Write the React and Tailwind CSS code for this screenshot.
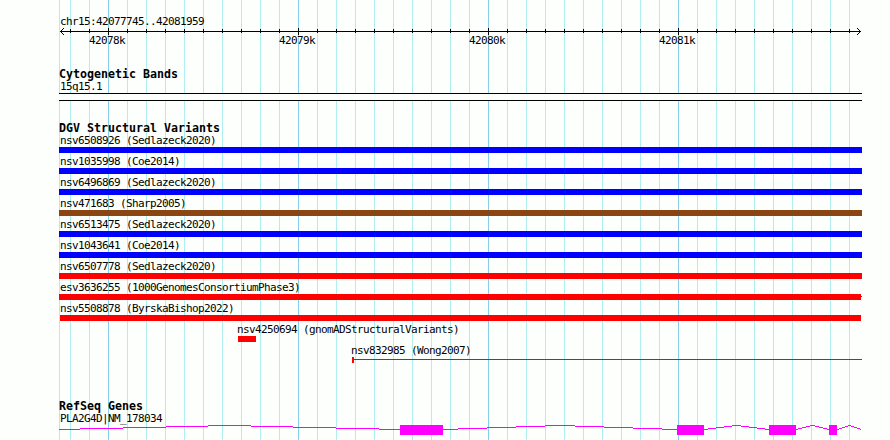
const MONO = "font-['DejaVu_Sans_Mono','Liberation_Mono',monospace]";

const minorLines = [59, ...Array.from({ length: 42 }, (_, i) => 70 + i * 19)].filter(
  (x) => x === 59 || (x - 108) % 190 !== 0
);
const majorLines = [108, 298, 488, 678];

function GridLines() {
  return (
    <svg className="absolute inset-0" width="890" height="440" shapeRendering="crispEdges">
      {minorLines.map((x) => (
        <rect key={x} x={x} y="0" width="1" height="440" fill="#afeeee" />
      ))}
      {majorLines.map((x) => (
        <rect key={x} x={x} y="0" width="1" height="440" fill="#87ceeb" />
      ))}
    </svg>
  );
}

function Label({ children, className = "" }) {
  return (
    <div className={`h-3 whitespace-pre text-[11px] leading-3 tracking-[-0.622px] ${className}`}>
      {children}
    </div>
  );
}

function Title({ children }) {
  return (
    <h2 className="h-[13px] whitespace-pre text-[11.63px] font-bold leading-3">{children}</h2>
  );
}

function Ruler() {
  const ticks = minorLines.slice(1);
  return (
    <svg className="block h-[9px] w-[803px]" viewBox="59 28 803 9" shapeRendering="crispEdges">
      <rect x="60" y="31" width="801" height="1" fill="#000" />
      {ticks.map((x) => (
        <rect key={x} x={x} y="29" width="1" height="4" fill="#000" />
      ))}
      {majorLines.map((x) => (
        <rect key={x} x={x} y="28" width="1" height="7" fill="#000" />
      ))}
      <path
        d="M60 31h1v1h-1zM61 30h1v1h-1zM61 32h1v1h-1zM62 29h1v1h-1zM62 33h1v1h-1zM63 28h1v1h-1zM63 34h1v1h-1z"
        fill="#000"
      />
      <path
        d="M860 31h1v1h-1zM859 30h1v1h-1zM859 32h1v1h-1zM858 29h1v1h-1zM858 33h1v1h-1zM857 28h1v1h-1zM857 34h1v1h-1z"
        fill="#000"
      />
    </svg>
  );
}

const variants = [
  { name: "nsv6508926 (Sedlazeck2020)", bar: "w-[803px] bg-[#0000ff]" },
  { name: "nsv1035998 (Coe2014)", bar: "w-[803px] bg-[#0000ff]" },
  { name: "nsv6496869 (Sedlazeck2020)", bar: "w-[803px] bg-[#0000ff]" },
  { name: "nsv471683 (Sharp2005)", bar: "w-[803px] bg-[#8b4513]" },
  { name: "nsv6513475 (Sedlazeck2020)", bar: "w-[803px] bg-[#0000ff]" },
  { name: "nsv1043641 (Coe2014)", bar: "w-[803px] bg-[#0000ff]" },
  { name: "nsv6507778 (Sedlazeck2020)", bar: "w-[803px] bg-[#ff0000]" },
  { name: "esv3636255 (1000GenomesConsortiumPhase3)", bar: "w-[802px] bg-[#ff0000]", tail: true },
  { name: "nsv5508878 (ByrskaBishop2022)", bar: "ml-px w-[801px] bg-[#ff0000]" },
  {
    name: "nsv4250694 (gnomADStructuralVariants)",
    indent: "pl-[178px]",
    bar: "ml-[179px] w-[18px] bg-[#ff0000]",
  },
];

function Variant({ name, indent = "pl-px", bar, tail }) {
  return (
    <div className="flex h-[21px] flex-col">
      <Label className={indent}>{name}</Label>
      <div className="flex h-[6px]">
        <div className={`h-[6px] ${bar}`} />
        {tail && <div className="mt-[2px] h-px w-px bg-[#ff0000]" />}
      </div>
    </div>
  );
}

const exons = [
  [400, 443],
  [677, 704],
  [769, 796],
  [829, 837],
];
const introns = [
  [59, 400],
  [443, 677],
  [704, 769],
  [796, 829],
  [837, 861],
];

// Each intron is a shallow hat rising four pixels to its midpoint, drawn in one-pixel steps.
function intronSteps([start, end]) {
  const unit = (end - start) / 8;
  const edges = [0, 0.5, 1.5, 2.5, 3.5, 4.5, 5.5, 6.5, 7.5, 8].map((k) =>
    Math.round(start + unit * k)
  );
  return [429, 428, 427, 426, 425, 426, 427, 428, 429].map((y, i) => ({
    x: edges[i],
    y,
    width: edges[i + 1] - edges[i],
  }));
}

function Gene() {
  return (
    <svg
      className="block h-[12px] w-[803px]"
      viewBox="59 425 803 12"
      shapeRendering="crispEdges"
      fill="#ff00ff"
    >
      {introns.flatMap(intronSteps).map((s) => (
        <rect key={s.x} x={s.x} y={s.y} width={s.width} height="1" />
      ))}
      {exons.map(([a, b]) => (
        <rect key={a} x={a} y="425" width={b - a} height="10" />
      ))}
    </svg>
  );
}

export default function App() {
  return (
    <div className={`relative h-[440px] w-[890px] overflow-hidden bg-[#fcfffc] text-black ${MONO}`}>
      <GridLines />
      <main className="relative flex flex-col pl-[59px]">
        <section className="flex h-[68px] flex-col pt-4">
          <Label className="pl-px">chr15:42077745..42081959</Label>
          <Ruler />
          <div className="-mt-[2px] flex gap-[154px] pl-[30px]">
            {["42078k", "42079k", "42080k", "42081k"].map((t) => (
              <Label key={t} className="w-9">
                {t}
              </Label>
            ))}
          </div>
        </section>
        <section className="flex h-[54px] flex-col">
          <Title>Cytogenetic Bands</Title>
          <Label className="pl-px">15q15.1</Label>
          <div className="h-2 w-[803px] border-y border-black bg-[#fcfffc]" />
        </section>
        <section className="flex h-[278px] flex-col">
          <Title>DGV Structural Variants</Title>
          <div className="flex flex-col">
            {variants.map((v) => (
              <Variant key={v.name} {...v} />
            ))}
            <div className="flex h-[21px] flex-col">
              <Label className="pl-[292px]">nsv832985 (Wong2007)</Label>
              <div className="ml-[293px] flex h-[6px] w-[510px]">
                <div className="h-[6px] w-[2px] bg-[#ff0000]" />
                <div className="mt-[2px] h-px flex-1 bg-[#ff0000]" />
              </div>
            </div>
          </div>
        </section>
        <section className="flex flex-col">
          <Title>RefSeq Genes</Title>
          <Label className="pl-px">PLA2G4D|NM_178034</Label>
          <Gene />
        </section>
      </main>
    </div>
  );
}
